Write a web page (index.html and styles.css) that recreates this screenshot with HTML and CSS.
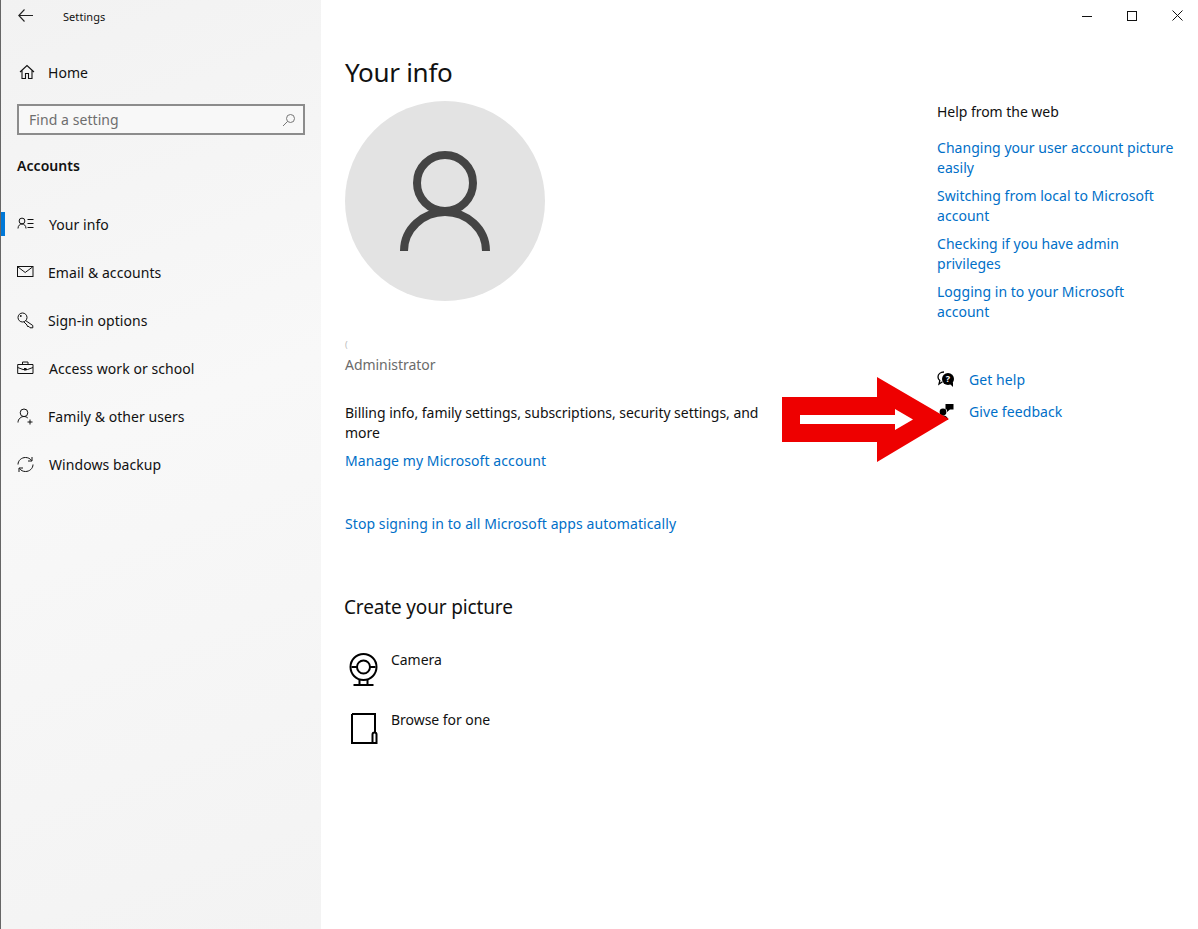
FILE: index.html
```html
<!DOCTYPE html>
<html lang="en">
<head>
  <meta charset="UTF-8">
  <meta name="viewport" content="width=device-width, initial-scale=1.0">
  <title>Settings</title>
  <link rel="stylesheet" href="styles.css">
</head>
<body>

  <div class="window">
    <!-- Left navigation -->
    <div class="sidebar">
      <div class="titlebar">
        <svg class="back-icon" width="15" height="13" viewBox="0 0 15 13"><path d="M6.500 .5 .8 6.500l5.700 6M.8 6.500H15" fill="none" stroke="#222" stroke-width="1.100"/></svg>
        <span class="app-name">Settings</span>
      </div>

      <div class="home-row">
        <svg class="nav-icon" width="16" height="16" viewBox="0 0 16 16"><path d="M1 8 8 1.500 15 8M3 6.500V14.500H6.500V9.500H9.500V14.500H13V6.500" fill="none" stroke="#111" stroke-width="1.100"/></svg>
        <span>Home</span>
      </div>

      <div class="search-box">
        <span>Find a setting</span>
        <svg width="14" height="14" viewBox="0 0 14 14"><circle cx="8.500" cy="5.500" r="4" fill="none" stroke="#777" stroke-width="1"/><path d="M5.600 8.400 1 13" stroke="#777" stroke-width="1"/></svg>
      </div>

      <div class="section-title">Accounts</div>

      <div class="nav-list">
        <div class="nav-item active">
          <svg class="nav-icon" width="17" height="16" viewBox="0 0 17 16"><circle cx="5" cy="5" r="2.900" fill="none" stroke="#111"/><path d="M1 12.500C1 9.500 3 8 5 8s4 1.500 4 4.500M10.500 3.500H16.500M10.500 7.500H16.500M10.500 11.500H16.500" fill="none" stroke="#111"/></svg>
          <span>Your info</span>
        </div>
        <div class="nav-item">
          <svg class="nav-icon" width="17" height="16" viewBox="0 0 17 16"><rect x="0.500" y="2.500" width="15.500" height="10" fill="none" stroke="#111"/><path d="M1 3 8.200 8.500 15.500 3" fill="none" stroke="#111"/></svg>
          <span class="shift">Email &amp; accounts</span>
        </div>
        <div class="nav-item">
          <svg class="nav-icon" width="17" height="17" viewBox="0 0 17 17"><circle cx="5.500" cy="5.500" r="4.500" fill="none" stroke="#111"/><path d="M8.500 8.500 15.800 13.500V15.800H13L12 14.500H10.500L10 13 7 10" fill="none" stroke="#111"/><circle cx="3.800" cy="4" r="0.900" fill="#111"/></svg>
          <span class="shift">Sign-in options</span>
        </div>
        <div class="nav-item">
          <svg class="nav-icon" width="17" height="16" viewBox="0 0 17 16"><path d="M.7 4.500H16V13.500H.7ZM5.500 4.500V2H11V4.500M.7 7.500 6 9.500H10.500L16 7.500" fill="none" stroke="#111"/><rect x="7" y="8" width="2.500" height="2.500" fill="#111"/></svg>
          <span>Access work or school</span>
        </div>
        <div class="nav-item">
          <svg class="nav-icon" width="17" height="17" viewBox="0 0 17 17"><circle cx="7" cy="4.800" r="3.800" fill="none" stroke="#111"/><path d="M1 14.500C1 11 4 8.500 7 8.500c1.500 0 2.800.6 3.800 1.500M13 11.500V16.500M10.500 14H15.500" fill="none" stroke="#111"/></svg>
          <span class="shift">Family &amp; other users</span>
        </div>
        <div class="nav-item">
          <svg class="nav-icon" width="17" height="17" viewBox="0 0 17 17"><path d="M1 8.500C1 4.500 4.500 1.500 8.500 1.500c2.500 0 4.500 1 6 3M16 8.500c0 4-3.500 7-7.500 7-2.500 0-4.500-1-6-3M15 1v4h-4M2 16v-4h4" fill="none" stroke="#111"/></svg>
          <span>Windows backup</span>
        </div>
      </div>
    </div>

    <!-- Main panel -->
    <div class="content">
      <div class="window-controls">
        <svg width="10" height="10" viewBox="0 0 10 10"><path d="M0 5.500H10" stroke="#111"/></svg>
        <svg width="10" height="10" viewBox="0 0 10 10"><rect x="0.500" y="0.500" width="9" height="9" fill="none" stroke="#111"/></svg>
        <svg width="11" height="11" viewBox="0 0 11 11"><path d="M.5.500 10.500 10.500M10.500.500.500 10.500" stroke="#111"/></svg>
      </div>

      <div class="columns">
        <div class="main-col">
          <h1 class="page-title">Your info</h1>
          <div class="avatar">
            <svg width="100" height="110" viewBox="0 0 100 110"><circle cx="50" cy="37" r="28" fill="none" stroke="#444" stroke-width="8"/><path d="M9 105C9 83 28 66 50 66s41 17 41 39" fill="none" stroke="#444" stroke-width="8"/></svg>
          </div>
          <div class="user-mark">(</div>
          <div class="user-role">Administrator</div>
          <p class="billing">Billing info, family settings, subscriptions, security settings, and more</p>
          <a href="#" class="link manage-link">Manage my Microsoft account</a>
          <a href="#" class="link stop-link">Stop signing in to all Microsoft apps automatically</a>

          <h2 class="sub-title">Create your picture</h2>
          <div class="picture-list">
            <div class="picture-row">
              <svg width="30" height="33" viewBox="0 0 30 33"><circle cx="14.500" cy="14" r="13" fill="none" stroke="#000" stroke-width="2"/><circle cx="14.500" cy="14" r="6.500" fill="none" stroke="#000" stroke-width="2"/><path d="M2.500 14h6M20.500 14h6M10.500 27v5M18.500 27v5M4.500 32H24.500" stroke="#000" stroke-width="2" fill="none"/></svg>
              <span>Camera</span>
            </div>
            <div class="picture-row">
              <svg width="30" height="33" viewBox="0 0 30 33"><path d="M3 1H26V20M23 30H3V1M23.500 30V21.500a2 2 0 0 1 4 0V30Z" fill="none" stroke="#000" stroke-width="2"/></svg>
              <span>Browse for one</span>
            </div>
          </div>
        </div>

        <div class="help-col">
          <div class="help-title">Help from the web</div>
          <a href="#" class="link help-link">Changing your user account picture easily</a>
          <a href="#" class="link help-link">Switching from local to Microsoft account</a>
          <a href="#" class="link help-link">Checking if you have admin privileges</a>
          <a href="#" class="link help-link">Logging in to your Microsoft account</a>

          <div class="help-actions">
            <div class="action-row">
              <svg width="18" height="17" viewBox="0 0 18 17"><path d="M7 1C3.500 1 1 3.200 1 6c0 1.500.7 2.700 1.800 3.600L2 13l3.500-2.200" fill="none" stroke="#000" stroke-width="1.300"/><circle cx="11" cy="8" r="6" fill="#000"/><path d="M13 13l3 3v-5z" fill="#000"/><text x="11" y="11" class="help-glyph">?</text></svg>
              <a href="#" class="link">Get help</a>
            </div>
            <div class="action-row">
              <svg width="18" height="17" viewBox="0 0 18 17"><circle cx="6" cy="9" r="3.400" fill="#000"/><path d="M1 17c0-3 2-4.500 5-4.500s5 1.500 5 4.500zM8.500 1H16.500V6.500H13L10 9V6.500H8.500z" fill="#000"/></svg>
              <a href="#" class="link">Give feedback</a>
            </div>
          </div>
        </div>
      </div>
    </div>

    <!-- Annotation arrow on top of the screenshot -->
    <svg class="annotation" width="170" height="86" viewBox="0 0 170 86">
      <path d="M0 20H95V0L167 42 95 85V65H0Z" fill="#ee0000"/>
      <path d="M18 38H113V32L131 42.500 113 53V47H18Z" fill="#fff"/>
    </svg>
  </div>

</body>
</html>
```

FILE: styles.css
```css
/* Basic reset */
* {
  margin: 0;
  padding: 0;
  box-sizing: border-box;
  font-family: "Noto Sans", Arial, sans-serif;
}

body {
  background-color: #fff;
  color: #111;
  font-size: 14px;
  letter-spacing: -0.04px;
}

.window {
  position: relative;
  display: flex;
  width: 1198px;
  height: 929px;
  overflow: hidden;
}

/* Left navigation */
.sidebar {
  width: 321px;
  flex-shrink: 0;
  background: linear-gradient(160deg, #f2f2f2 0%, #f8f8f8 45%, #f3f3f3 100%);
  border-left: 1px solid #666;
  padding-top: 8px;
  letter-spacing: 0.06px;
}

.titlebar {
  display: flex;
  align-items: center;
  height: 17px;
  padding-left: 17px;
}

.back-icon {
  margin-right: 30px;
  margin-bottom: 2px;
}

.app-name {
  font-size: 11px;
}

.home-row {
  display: flex;
  align-items: center;
  gap: 13px;
  height: 24px;
  margin-top: 35px;
  padding-left: 18px;
}

.search-box {
  display: flex;
  align-items: center;
  justify-content: space-between;
  width: 288px;
  height: 31px;
  margin: 20px 0 0 16px;
  padding: 0 7px 0 10px;
  background-color: #f8f8f8;
  border: 2px solid #8c8c8c;
  color: #6e6e6e;
}

.section-title {
  margin: 21px 0 0 16px;
  height: 22px;
  font-weight: 600;
}

.nav-list {
  margin-top: 22px;
}

.nav-item {
  position: relative;
  display: flex;
  align-items: center;
  height: 48px;
  padding-left: 16px;
}

.nav-item .nav-icon {
  margin-right: 15px;
}

.nav-item .shift {
  margin-left: -1px;
}

.nav-item.active::before {
  content: "";
  position: absolute;
  left: 0;
  top: 12px;
  width: 4px;
  height: 24px;
  background-color: #0078d7;
}

/* Main panel */
.content {
  flex: 1;
  position: relative;
}

.window-controls {
  position: absolute;
  top: 10px;
  right: 15px;
  display: flex;
  align-items: center;
  gap: 35px;
}

.columns {
  display: flex;
  justify-content: space-between;
  padding: 0 21px 0 24px;
}

.main-col {
  width: 420px;
}

.page-title {
  margin-top: 53px;
  height: 48px;
  font-size: 26px;
  font-weight: 400;
  line-height: 38px;
  letter-spacing: -0.3px;
}

.avatar {
  display: flex;
  align-items: center;
  justify-content: center;
  width: 200px;
  height: 200px;
  border-radius: 50%;
  background-color: #e3e3e3;
}

.user-mark {
  height: 20px;
  margin-top: 34px;
  font-size: 9px;
  color: #bbb;
  line-height: 20px;
}

.user-role {
  height: 20px;
  line-height: 20px;
  color: #6b6b6b;
}

.billing {
  margin-top: 28px;
  line-height: 20px;
}

.link {
  color: #006fc8;
  text-decoration: none;
  letter-spacing: 0.08px;
}

.manage-link {
  display: block;
  margin-top: 8px;
  line-height: 20px;
}

.stop-link {
  display: block;
  margin-top: 43px;
  line-height: 20px;
}

.sub-title {
  margin: 59px 0 0 -1px;
  height: 28px;
  font-size: 19px;
  font-weight: 400;
  line-height: 28px;
  letter-spacing: -0.15px;
}

.picture-list {
  margin-top: 29px;
}

.picture-row {
  display: flex;
  align-items: flex-start;
  gap: 12px;
  height: 60px;
  margin-left: 4px;
}

.picture-row svg {
  margin-top: 3px;
}

.picture-row span {
  line-height: 20px;
}

.help-col {
  width: 240px;
  padding-top: 102px;
}

.help-title {
  height: 20px;
  margin-bottom: 16px;
  line-height: 20px;
}

.help-link {
  display: block;
  margin-bottom: 8px;
  line-height: 20px;
  letter-spacing: 0.03px;
}

.help-actions {
  margin-top: 41px;
}

.action-row {
  display: flex;
  align-items: center;
  gap: 14px;
  height: 32px;
}

.help-glyph {
  fill: #fff;
  font-size: 9px;
  font-weight: 700;
  text-anchor: middle;
}

/* Annotation arrow */
.annotation {
  position: absolute;
  left: 782px;
  top: 377px;
}
```
